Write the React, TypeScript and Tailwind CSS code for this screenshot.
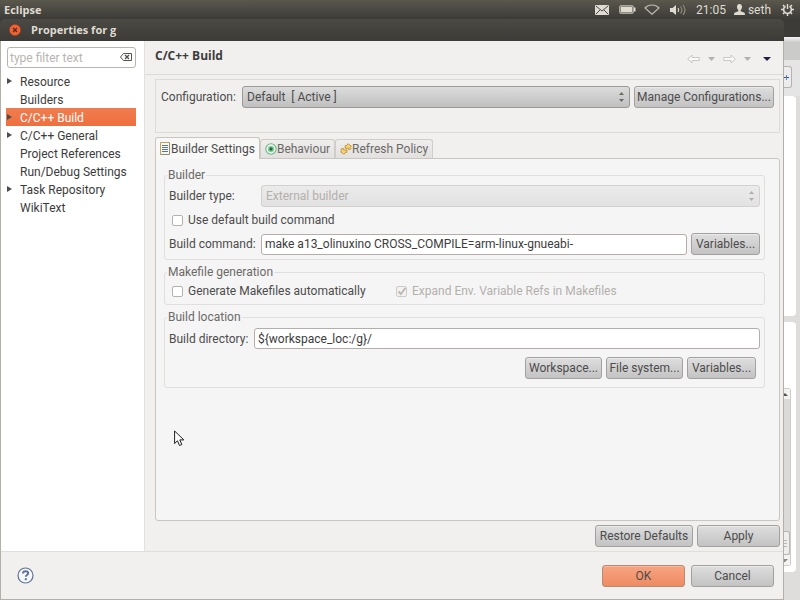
import React, { useState } from "react";

interface TreeItem {
    name: string;
    expandable: boolean;
}

const treeItems: TreeItem[] = [
    { name: "Resource", expandable: true },
    { name: "Builders", expandable: false },
    { name: "C/C++ Build", expandable: true },
    { name: "C/C++ General", expandable: true },
    { name: "Project References", expandable: false },
    { name: "Run/Debug Settings", expandable: false },
    { name: "Task Repository", expandable: true },
    { name: "WikiText", expandable: false },
];

const tabs = [
    { name: "Builder Settings", icon: SettingsIcon },
    { name: "Behaviour", icon: BehaviourIcon },
    { name: "Refresh Policy", icon: RefreshIcon },
];

function SettingsIcon() {
    return (
        <svg width="11" height="13" viewBox="0 0 11 13" className="shrink-0">
            <path d="M0.5 12.5V0.5H9.5" fill="#fdfdf6" stroke="#c2a25a" />
            <path d="M1 1h8v11H1z" fill="#f6f8f4" />
            <path d="M0.5 12.5H9.5V0.5" fill="none" stroke="#8a8f7c" />
            <path d="M2 3.5h6M2 5.5h6M2 7.5h6M2 9.5h6" stroke="#5d7680" />
        </svg>
    );
}

function BehaviourIcon() {
    return (
        <svg width="12" height="12" viewBox="0 0 12 12" className="shrink-0">
            <circle cx="6" cy="6" r="5.2" fill="#f2faf4" stroke="#6db487" strokeWidth="1.1" />
            <circle cx="6" cy="6" r="3.2" fill="#8ccb9e" />
            <circle cx="6" cy="6" r="1.7" fill="#256b3c" />
        </svg>
    );
}

function RefreshIcon() {
    return (
        <svg width="12" height="12" viewBox="0 0 12 12" className="shrink-0" fill="#f7d572" stroke="#c08a28" strokeWidth="0.9">
            <path d="M5.2 5.2V2.6h1.4L8.2 0.7l1.2 1.2 2 1.2-1.2 1.4 0.9 1.2-2.2 1.1-0.6-1.6L6.8 5.4z" />
            <path d="M6.8 6.8v2.6H5.4l-1.6 1.9-1.2-1.2-2-1.2 1.2-1.4-0.9-1.2 2.2-1.1 0.6 1.6 1.5 0.4z" />
        </svg>
    );
}

function StepArrows({ muted }: { muted?: boolean }) {
    return (
        <svg
            width="5"
            height="10"
            viewBox="0 0 5 10"
            className={`pointer-events-none absolute right-1.5 top-1.5 ${muted ? "fill-[#b0aeaa]" : "fill-[#6c6a66]"}`}
        >
            <path d="M2.5 0L5 3H0z" />
            <path d="M2.5 10L5 7H0z" />
        </svg>
    );
}

function PushButton({ children, className = "" }: { children: React.ReactNode; className?: string }) {
    return (
        <button
            type="button"
            className={`h-[22px] shrink-0 whitespace-nowrap rounded-[3px] border border-[#a3a19d] bg-linear-to-b from-[#dedede] to-[#c3c3c3] text-center leading-4 text-[#4c4c4c] shadow-[inset_0_1px_0_#eaeaea] ${className}`}
        >
            {children}
        </button>
    );
}

function Group({ title, children, className = "" }: { title: string; children: React.ReactNode; className?: string }) {
    return (
        <fieldset className={`min-w-0 rounded-[3px] border border-[#e0dfdd] px-1 ${className}`}>
            <legend className="-ml-0.5 px-px leading-4 text-[#6b6a67]">{title}</legend>
            {children}
        </fieldset>
    );
}

function TopPanel() {
    return (
        <header className="flex h-[19px] items-center bg-linear-to-b from-[#5a584d] to-[#3c3b37] pl-1 pr-1.5 text-[#dfdbd2]">
            <span className="flex-1 font-['Open_Sans','Noto_Sans',sans-serif] text-[11px] font-bold">Eclipse</span>
            <div className="flex items-center">
                <svg width="14" height="10" viewBox="0 0 14 10">
                    <rect width="14" height="10" rx="1" fill="#dfdbd2" />
                    <path d="M1 1l6 5 6-5M1 9l4-4M13 9L9 5" fill="none" stroke="#4a4942" />
                </svg>
                <svg width="17" height="9" viewBox="0 0 17 9" className="ml-2.5">
                    <rect x="0.5" y="0.5" width="14" height="8" rx="1.5" fill="#8f8c82" stroke="#a8a59b" />
                    <rect x="2" y="2" width="11" height="5" fill="#dfdbd2" />
                    <rect x="15" y="2.5" width="1.5" height="4" fill="#dfdbd2" />
                </svg>
                <svg width="16" height="11" viewBox="0 0 16 11" className="ml-2">
                    <path d="M1 4C4.5 0 11.5 0 15 4L8 10.3z" fill="none" stroke="#bbb8ad" strokeWidth="1.2" />
                </svg>
                <svg width="16" height="12" viewBox="0 0 16 12" className="ml-2.5">
                    <path d="M0 4h2.5L6 1v10L2.5 8H0z" fill="#dfdbd2" />
                    <path d="M8 4q1.5 2 0 4" fill="none" stroke="#dfdbd2" strokeWidth="1.2" />
                    <path d="M10.5 2.5q2.8 3.5 0 7M13 1q4 5 0 10" fill="none" stroke="#8f8c82" strokeWidth="1.2" />
                </svg>
                <span className="ml-2.5">21:05</span>
                <svg width="11" height="11" viewBox="0 0 11 11" className="ml-2" fill="#dfdbd2">
                    <path d="M5.5 0C7.2 0 8 1.2 8 2.8 8 4.5 7.3 5.5 6.7 6v1.2L10 8.5c0.7 0.3 1 0.8 1 2.5H0C0 9.3 0.3 8.8 1 8.5l3.3-1.3V6C3.7 5.5 3 4.5 3 2.8 3 1.2 3.8 0 5.5 0z" />
                </svg>
                <span className="ml-[3px]">seth</span>
                <svg width="13" height="13" viewBox="0 0 13 13" className="ml-2.5" fill="none" stroke="#dfdbd2">
                    <path d="M4.5 3.2a3.9 3.9 0 1 0 4 0" strokeWidth="1.6" />
                    <path d="M6.5 1v5" strokeWidth="1.4" />
                    <path d="M0 6.5h2M11 6.5h2M6.5 11v2M2 2l1.4 1.4M11 2L9.6 3.4M2 11l1.4-1.4M11 11L9.6 9.6" strokeWidth="1.5" />
                </svg>
            </div>
        </header>
    );
}

function Sidebar() {
    const [selected, setSelected] = useState("C/C++ Build");

    return (
        <aside className="w-[143px] shrink-0 bg-white pt-1.5">
            <div className="relative ml-1.5 mr-2">
                <input
                    type="text"
                    aria-label="Filter"
                    placeholder="type filter text"
                    className="block h-[21px] w-full rounded-[3px] border border-[#b9b5ae] bg-white pl-0.5 pr-5 placeholder:text-[#b8b5b1]"
                />
                <svg width="12" height="8" viewBox="0 0 12 8" className="absolute right-1 top-1.5" fill="none" stroke="#55534f">
                    <path d="M3.5 0.5H11.5V7.5H3.5L0.5 4z" />
                    <path d="M5 2l4 4M9 2L5 6" strokeWidth="1.4" />
                </svg>
            </div>
            <ul className="ml-[5px] mr-2 mt-1">
                {treeItems.map((item) => (
                    <li key={item.name}>
                        <button
                            type="button"
                            onClick={() => setSelected(item.name)}
                            className={`flex h-[18px] w-full items-center whitespace-nowrap pt-0.5 text-left ${
                                item.name === selected ? "bg-linear-to-b from-[#f07c4e] to-[#ee6f3f] text-white" : "text-[#3c3c3c]"
                            }`}
                        >
                            <span className="flex h-4 w-3.5 shrink-0 items-center pb-0.5">
                                {item.expandable && (
                                    <svg width="5" height="6" viewBox="0 0 5 6" className="ml-px" fill="#4f4e4b">
                                        <path d="M0 0l5 3-5 3z" />
                                    </svg>
                                )}
                            </span>
                            {item.name}
                        </button>
                    </li>
                ))}
            </ul>
        </aside>
    );
}

function PageHeader() {
    return (
        <div className="flex h-[34px] items-center justify-between border-b border-[#dddbd8] pb-1 pl-2.5 pr-3">
            <h1 className="font-['Open_Sans','Noto_Sans',sans-serif] font-bold text-[#3c3c3c]">C/C++ Build</h1>
            <div className="mt-1.5 flex items-center gap-2">
                <button type="button" aria-label="Back">
                    <svg width="13" height="10" viewBox="0 0 13 10" fill="#fafafa" stroke="#c9c7c3">
                        <path d="M0.7 5L5 1v2.5h7.3v3H5V9z" />
                    </svg>
                </button>
                <button type="button" aria-label="Back history">
                    <svg width="7" height="4" viewBox="0 0 7 4" fill="#b3b1ad">
                        <path d="M0 0h7L3.5 4z" />
                    </svg>
                </button>
                <button type="button" aria-label="Forward">
                    <svg width="13" height="10" viewBox="0 0 13 10" fill="#fafafa" stroke="#c9c7c3">
                        <path d="M12.3 5L8 1v2.5H0.7v3H8V9z" />
                    </svg>
                </button>
                <button type="button" aria-label="Forward history">
                    <svg width="7" height="4" viewBox="0 0 7 4" fill="#b3b1ad">
                        <path d="M0 0h7L3.5 4z" />
                    </svg>
                </button>
                <button type="button" aria-label="View menu" className="ml-1">
                    <svg width="8" height="4" viewBox="0 0 8 4" fill="#23203f">
                        <path d="M0 0h8L4 4z" />
                    </svg>
                </button>
            </div>
        </div>
    );
}

function BuilderSettings() {
    return (
        <div className="flex flex-col gap-1">
            <Group title="Builder">
                <div className="mt-0.5 flex items-center">
                    <label htmlFor="builder-type" className="w-[92px] shrink-0">
                        Builder type:
                    </label>
                    <div className="relative flex-1">
                        <select
                            id="builder-type"
                            disabled
                            className="block h-[22px] w-full appearance-none rounded-[3px] border border-[#d3d1ce] bg-linear-to-b from-[#ebebeb] to-[#e2e2e2] px-1 text-[#b3b0ac]"
                        >
                            <option>External builder</option>
                        </select>
                        <StepArrows muted />
                    </div>
                </div>
                <div className="flex h-[26px] items-center pl-[3px]">
                    <Check id="default-command" label="Use default build command" />
                </div>
                <div className="mb-1 flex items-center">
                    <label htmlFor="build-command" className="w-[92px] shrink-0 whitespace-nowrap">
                        Build command:
                    </label>
                    <input
                        id="build-command"
                        type="text"
                        defaultValue="make a13_olinuxino CROSS_COMPILE=arm-linux-gnueabi-"
                        className="h-[21px] min-w-0 flex-1 rounded-[3px] border border-[#b5aea8] bg-white px-[3px] text-[#3c3c3c]"
                    />
                    <PushButton className="ml-1 w-[69px]">Variables...</PushButton>
                </div>
            </Group>

            <Group title="Makefile generation">
                <div className="mb-[5px] mt-[3px] flex items-center pl-[3px]">
                    <div className="w-[224px]">
                        <Check id="generate" label="Generate Makefiles automatically" />
                    </div>
                    <Check id="expand-env" label="Expand Env. Variable Refs in Makefiles" disabled />
                </div>
            </Group>

            <Group title="Build location">
                <div className="mt-[3px] flex items-center">
                    <label htmlFor="build-directory" className="w-[85px] shrink-0 whitespace-nowrap">
                        Build directory:
                    </label>
                    <input
                        id="build-directory"
                        type="text"
                        defaultValue="${workspace_loc:/g}/"
                        className="h-[21px] min-w-0 flex-1 rounded-[3px] border border-[#b5aea8] bg-white px-[3px] text-[#3c3c3c]"
                    />
                </div>
                <div className="mb-2 mr-1 mt-2 flex justify-end gap-1">
                    <PushButton className="w-[77px]">Workspace...</PushButton>
                    <PushButton className="w-[77px]">File system...</PushButton>
                    <PushButton className="w-[69px]">Variables...</PushButton>
                </div>
            </Group>
        </div>
    );
}

function Check({ id, label, disabled = false }: { id: string; label: string; disabled?: boolean }) {
    return (
        <div className="flex items-center">
            <span className="relative h-[11px] w-[11px]">
                <input
                    id={id}
                    type="checkbox"
                    disabled={disabled}
                    defaultChecked={disabled}
                    className="peer block h-[11px] w-[11px] appearance-none rounded-[2px] border border-[#b5b2ae] bg-white disabled:border-[#cfccc8] disabled:bg-[#f3f2f1]"
                />
                <svg
                    width="11"
                    height="11"
                    viewBox="0 0 11 11"
                    className={`pointer-events-none absolute left-0 top-0 hidden fill-none peer-checked:block ${disabled ? "stroke-[#bdbab6]" : "stroke-[#4c4c4c]"}`}
                >
                    <path d="M2.5 5.5L4.8 8L9.5 2" strokeWidth="2" />
                </svg>
            </span>
            <label htmlFor={id} className={`whitespace-nowrap pl-[5px] leading-4 ${disabled ? "text-[#b3b0ac]" : ""}`}>
                {label}
            </label>
        </div>
    );
}

function BuildPage() {
    const [activeTab, setActiveTab] = useState("Builder Settings");

    return (
        <main className="flex min-w-0 flex-1 flex-col border-l border-[#e3e1df]">
            <PageHeader />
            <div className="flex flex-1 flex-col pb-1 pl-2.5 pr-[3px] pt-1">
                <div className="flex h-[54px] items-start border border-[#dddbd8] px-[5px] pt-1.5">
                    <label htmlFor="configuration" className="w-[81px] shrink-0 whitespace-nowrap leading-[22px]">
                        Configuration:
                    </label>
                    <div className="relative min-w-0 flex-1">
                        <select
                            id="configuration"
                            className="block h-[22px] w-full appearance-none rounded-[3px] border border-[#9b9995] bg-linear-to-b from-[#dcdcdc] to-[#c0c0c0] px-1 text-[#4c4c4c]"
                        >
                            <option>Default{"\u00a0"} [ Active ]</option>
                        </select>
                        <StepArrows />
                    </div>
                    <PushButton className="ml-1 w-[140px]">Manage Configurations...</PushButton>
                </div>

                {/* Tabs */}
                <div role="tablist" className="mt-1 flex h-[21px] items-end">
                    {tabs.map((tab) => {
                        const TabIcon = tab.icon;
                        const active = tab.name === activeTab;

                        return (
                            <button
                                key={tab.name}
                                type="button"
                                role="tab"
                                aria-selected={active}
                                onClick={() => setActiveTab(tab.name)}
                                className={`flex items-center whitespace-nowrap rounded-t-[3px] border border-b-0 px-1 ${
                                    active
                                        ? "relative -mb-px h-[22px] border-[#c9c5c0] bg-[#f8f8f7]"
                                        : "h-[19px] border-[#d0cdc9] bg-linear-to-b from-[#efeeed] to-[#e2e1df] text-[#6b6a67]"
                                }`}
                            >
                                <TabIcon />
                                {tab.name}
                            </button>
                        );
                    })}
                </div>
                <div role="tabpanel" className="flex-1 rounded-[3px] rounded-tl-none border border-[#c9c5c0] bg-[#f5f5f5] pb-3 pl-2 pr-3.5 pt-2">
                    {activeTab === "Builder Settings" && <BuilderSettings />}
                </div>

                <div className="mt-1 flex justify-end gap-1">
                    <PushButton className="w-[98px]">Restore Defaults</PushButton>
                    <PushButton className="w-[83px]">Apply</PushButton>
                </div>
            </div>
        </main>
    );
}

function DialogFooter() {
    return (
        <footer className="flex h-12 items-center justify-between border-t border-[#e0dedb] pl-4 pr-[9px]">
            <button type="button" aria-label="Help">
                <svg width="17" height="17" viewBox="0 0 17 17" fill="none" stroke="#5f7396">
                    <circle cx="8.5" cy="8.5" r="7.5" fill="#f4f6fa" strokeWidth="1.2" />
                    <path d="M6 6.5c0-3.2 5.2-3 5.2-0.2 0 1.7-2.4 1.7-2.4 3.5" strokeWidth="2" />
                    <path d="M7.8 12.2h2" strokeWidth="2" />
                </svg>
            </button>
            <div className="flex gap-1.5">
                <button
                    type="button"
                    className="h-[22px] w-[83px] rounded-[3px] border border-[#b58a78] bg-linear-to-b from-[#f7a482] to-[#ee8b62] leading-4 text-[#4c4c4c] shadow-[inset_0_1px_0_#fab89c]"
                >
                    OK
                </button>
                <PushButton className="w-[83px]">Cancel</PushButton>
            </div>
        </footer>
    );
}

// Sliver of the main editor window that shows to the right of the dialog
function EditorEdge() {
    return (
        <div className="flex w-4 shrink-0 flex-col overflow-hidden bg-[#dedddc]">
            <div className="h-[18px] bg-[#3c3b37]" />
            <div className="h-[5px] bg-linear-to-b from-[#f4f4f4] to-[#cfcfcf]" />
            <div className="h-[18px] bg-[#cbcbca]" />
            <div className="h-9 bg-[#e6e5e5] pt-1.5">
                <div className="flex h-[22px] w-2 items-center rounded-r-[3px] border border-l-0 border-[#b5b3b0] bg-[#ececec]">
                    <svg width="6" height="7" viewBox="0 0 6 7">
                        <path d="M0 3.5h5" stroke="#3d4f73" />
                        <path d="M2.5 1v5" stroke="#4a86c8" />
                    </svg>
                </div>
            </div>
            <div className="h-[220px] w-3 rounded-r-[4px] bg-white" />
            <div className="mt-1.5 flex w-3 flex-1 flex-col rounded-r-[4px] bg-white pt-[66px]">
                <div className="flex w-[7px] flex-1 flex-col rounded-r-[3px] border border-l-0 border-[#cfccc8] bg-[#dcdad8]">
                    <div className="flex h-2.5 items-center bg-[#f4f3f2]">
                        <svg width="4" height="3" viewBox="0 0 4 3" fill="#55534f">
                            <path d="M1 0l3 3H0V1z" />
                        </svg>
                    </div>
                    <div className="flex-1" />
                    <div className="flex h-6 flex-col justify-center gap-0.5 rounded-r-[3px] border border-l-0 border-[#b9b6b2] bg-[#efeeed]">
                        <span className="h-px w-[3px] bg-[#b9b6b2]" />
                        <span className="h-px w-[3px] bg-[#b9b6b2]" />
                        <span className="h-px w-[3px] bg-[#b9b6b2]" />
                    </div>
                    <div className="flex h-2.5 items-center bg-[#f4f3f2]">
                        <svg width="4" height="3" viewBox="0 0 4 3" fill="#8b8985">
                            <path d="M0 0h4L1 3H0z" />
                        </svg>
                    </div>
                </div>
                <div className="h-1.5" />
            </div>
            <div className="h-7" />
        </div>
    );
}

export default function App() {
    return (
        <div className="relative flex min-h-screen flex-col bg-[#3c3b37] font-[Roboto,'Noto_Sans',sans-serif] text-[12px] leading-4 text-[#4c4c4c]">
            <TopPanel />
            <div className="flex flex-1">
                <div className="flex min-w-0 flex-1 flex-col">
                    <div className="flex h-[22px] items-center gap-2.5 rounded-t-[5px] bg-linear-to-b from-[#4a4944] to-[#3c3b37] pl-[9px] text-[#dfdbd2]">
                        <button type="button" aria-label="Close">
                            <svg width="12" height="12" viewBox="0 0 12 12" className="block">
                                <circle cx="6" cy="6" r="5.7" fill="#ee6436" stroke="#8c3a1c" strokeWidth="0.6" />
                                <path d="M4 4l4 4M8 4L4 8" stroke="#5a2313" strokeWidth="1.3" />
                            </svg>
                        </button>
                        <span className="font-['Open_Sans','Noto_Sans',sans-serif] text-[11px] font-bold">Properties for g</span>
                    </div>
                    <div className="flex flex-1 flex-col border border-t-0 border-[#b3b0ac] bg-[#f1f0ee]">
                        <div className="flex flex-1">
                            <Sidebar />
                            <BuildPage />
                        </div>
                        <DialogFooter />
                    </div>
                </div>
                <EditorEdge />
            </div>

            {/* Mouse pointer */}
            <svg width="11" height="17" viewBox="0 0 11 17" className="pointer-events-none absolute left-[174px] top-[430px]">
                <path d="M0.6 1v12.5l2.9-2.7 2 4.7 2.3-1-2-4.6h4z" fill="#fff" stroke="#1c1c1c" />
            </svg>
        </div>
    );
}
